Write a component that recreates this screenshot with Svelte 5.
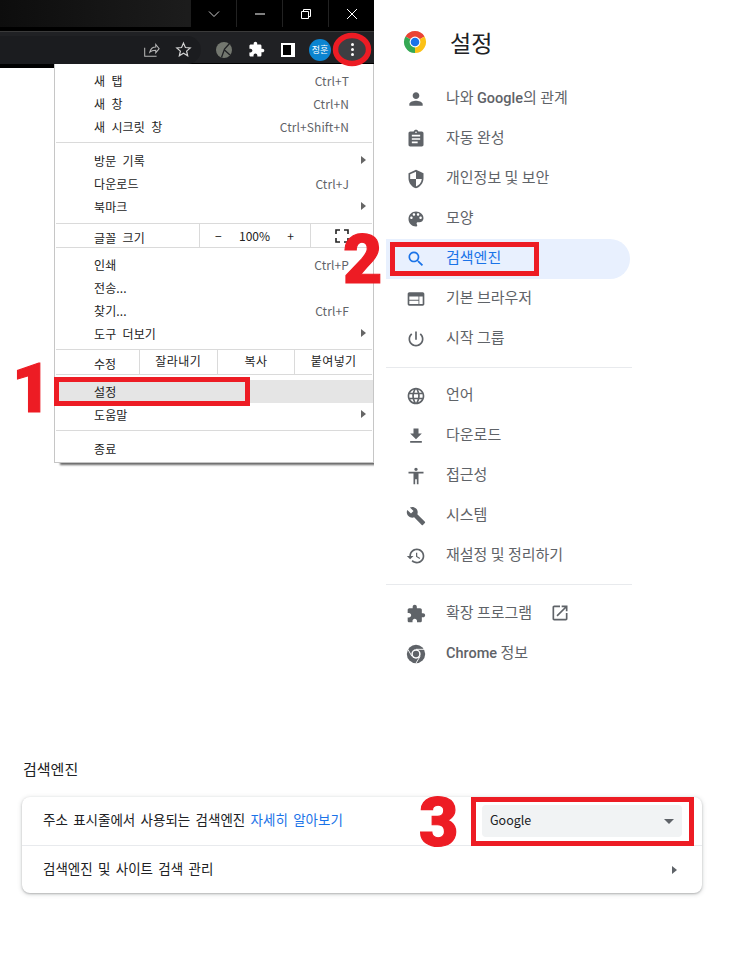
<script>
  const P = {
    person: 'M12 12c2.21 0 4-1.79 4-4s-1.79-4-4-4-4 1.79-4 4 1.79 4 4 4zm0 2c-2.67 0-8 1.34-8 4v2h16v-2c0-2.66-5.33-4-8-4z',
    clip: 'M19 3h-4.18C14.4 1.84 13.3 1 12 1c-1.3 0-2.4.84-2.82 2H5c-1.1 0-2 .9-2 2v14c0 1.1.9 2 2 2h14c1.1 0 2-.9 2-2V5c0-1.1-.9-2-2-2zm-7 0c.55 0 1 .45 1 1s-.45 1-1 1-1-.45-1-1 .45-1 1-1zm2 14H7v-2h7v2zm3-4H7v-2h10v2zm0-4H7V7h10v2z',
    shield: 'M12 1L3 5v6c0 5.55 3.84 10.74 9 12 5.16-1.26 9-6.45 9-12V5l-9-4zm0 10.99h7c-.53 4.12-3.28 7.79-7 8.94V12H5V6.3l7-3.11v8.8z',
    palette: 'M12 3c-4.97 0-9 4.03-9 9s4.03 9 9 9c.83 0 1.5-.67 1.5-1.5 0-.39-.15-.74-.39-1.01-.23-.26-.38-.61-.38-.99 0-.83.67-1.5 1.5-1.5H16c2.76 0 5-2.24 5-5 0-4.42-4.03-8-9-8zm-5.5 9c-.83 0-1.5-.67-1.5-1.5S5.67 9 6.5 9 8 9.67 8 10.5 7.33 12 6.5 12zm3-4C8.67 8 8 7.33 8 6.5S8.67 5 9.5 5s1.5.67 1.5 1.5S10.33 8 9.5 8zm5 0c-.83 0-1.5-.67-1.5-1.5S13.67 5 14.5 5s1.5.67 1.5 1.5S15.33 8 14.5 8zm3 4c-.83 0-1.5-.67-1.5-1.5S16.67 9 17.5 9s1.5.67 1.5 1.5-.67 1.5-1.5 1.5z',
    search: 'M15.5 14h-.79l-.28-.27C15.41 12.59 16 11.11 16 9.5 16 5.91 13.09 3 9.5 3S3 5.91 3 9.5 5.91 16 9.5 16c1.61 0 3.09-.59 4.23-1.57l.27.28v.79l5 4.99L20.49 19l-4.99-5zm-6 0C7.01 14 5 11.99 5 9.5S7.01 5 9.5 5 14 7.01 14 9.5 11.99 14 9.5 14z',
    web: 'M20 4H4c-1.1 0-1.99.9-1.99 2L2 18c0 1.1.9 2 2 2h16c1.1 0 2-.9 2-2V6c0-1.1-.9-2-2-2zm-5 14H4v-4h11v4zm0-5H4V9h11v4zm5 5h-4V9h4v9z',
    power: 'M13 3h-2v10h2V3zm4.83 2.17l-1.42 1.42C17.99 7.86 19 9.81 19 12c0 3.87-3.13 7-7 7s-7-3.13-7-7c0-2.19 1.01-4.14 2.58-5.42L6.17 5.17C4.23 6.82 3 9.26 3 12c0 4.97 4.03 9 9 9s9-4.03 9-9c0-2.74-1.23-5.18-3.17-6.83z',
    globe: 'M11.99 2C6.47 2 2 6.48 2 12s4.47 10 9.99 10C17.52 22 22 17.52 22 12S17.52 2 11.99 2zm6.93 6h-2.95c-.32-1.25-.78-2.45-1.38-3.56 1.84.63 3.37 1.91 4.33 3.56zM12 4.04c.83 1.2 1.48 2.53 1.91 3.96h-3.82c.43-1.43 1.08-2.76 1.91-3.96zM4.26 14C4.1 13.36 4 12.69 4 12s.1-1.36.26-2h3.38c-.08.66-.14 1.32-.14 2 0 .68.06 1.34.14 2H4.26zm.82 2h2.95c.32 1.25.78 2.45 1.38 3.56-1.84-.63-3.37-1.9-4.33-3.56zm2.95-8H5.08c.96-1.66 2.49-2.93 4.33-3.56C8.81 5.55 8.35 6.75 8.03 8zM12 19.96c-.83-1.2-1.48-2.53-1.91-3.96h3.82c-.43 1.43-1.08 2.76-1.91 3.96zM14.34 14H9.66c-.09-.66-.16-1.32-.16-2 0-.68.07-1.35.16-2h4.68c.09.65.16 1.32.16 2 0 .68-.07 1.34-.16 2zm.25 5.56c.6-1.11 1.06-2.31 1.38-3.56h2.95c-.96 1.65-2.49 2.93-4.33 3.56zM16.36 14c.08-.66.14-1.32.14-2 0-.68-.06-1.34-.14-2h3.38c.16.64.26 1.31.26 2s-.1 1.36-.26 2h-3.38z',
    download: 'M19 9h-4V3H9v6H5l7 7 7-7zM5 18v2h14v-2H5z',
    access: 'M12 2c1.1 0 2 .9 2 2s-.9 2-2 2-2-.9-2-2 .9-2 2-2zm9 7h-6v13h-2v-6h-2v6H9V9H3V7h18v2z',
    wrench: 'M22.7 19l-9.1-9.1c.9-2.3.4-5-1.5-6.9-2-2-5-2.4-7.4-1.3L9 6 6 9 1.6 4.7C.4 7.1.9 10.1 2.9 12.1c1.9 1.9 4.6 2.4 6.9 1.5l9.1 9.1c.4.4 1 .4 1.4 0l2.3-2.3c.5-.4.5-1.1.1-1.4z',
    restore: 'M13 3c-4.97 0-9 4.03-9 9H1l3.89 3.89.07.14L9 12H6c0-3.87 3.13-7 7-7s7 3.13 7 7-3.13 7-7 7c-1.93 0-3.68-.79-4.94-2.06l-1.42 1.42C8.27 19.99 10.51 21 13 21c4.97 0 9-4.03 9-9s-4.03-9-9-9zm-1 5v5l4.28 2.54.72-1.21-3.5-2.08V8H12z',
    ext: 'M20.5 11H19V7c0-1.1-.9-2-2-2h-4V3.5C13 2.12 11.88 1 10.5 1S8 2.12 8 3.5V5H4c-1.1 0-1.99.9-1.99 2v3.8H3.5c1.49 0 2.7 1.21 2.7 2.7s-1.21 2.7-2.7 2.7H2V20c0 1.1.9 2 2 2h3.8v-1.5c0-1.49 1.21-2.7 2.7-2.7 1.49 0 2.7 1.21 2.7 2.7V22H17c1.1 0 2-.9 2-2v-4h1.5c1.38 0 2.5-1.12 2.5-2.5S21.88 11 20.5 11z',
    open: 'M19 19H5V5h7V3H5c-1.11 0-2 .9-2 2v14c0 1.1.89 2 2 2h14c1.1 0 2-.9 2-2v-7h-2v7zM14 3v2h3.59l-9.83 9.83 1.41 1.41L19 6.41V10h2V3h-7z'
  };
  const groupA = [
    { i: 'person', pre: '나와 ', b: 'Google', t: '의 관계' }, { i: 'clip', t: '자동 완성' }, { i: 'shield', t: '개인정보 및 보안' },
    { i: 'palette', t: '모양' }, { i: 'search', t: '검색엔진', active: true }, { i: 'web', t: '기본 브라우저' }, { i: 'power', t: '시작 그룹' }
  ];
  const groupB = [
    { i: 'globe', t: '언어' }, { i: 'download', t: '다운로드' }, { i: 'access', t: '접근성' },
    { i: 'wrench', t: '시스템' }, { i: 'restore', t: '재설정 및 정리하기' }
  ];
  const m1 = [['새 탭', 'Ctrl+T'], ['새 창', 'Ctrl+N'], ['새 시크릿 창', 'Ctrl+Shift+N']];
  const m2 = [['방문 기록', '', 1], ['다운로드', 'Ctrl+J'], ['북마크', '', 1]];
  const m3 = [['인쇄', 'Ctrl+P'], ['전송...', ''], ['찾기...', 'Ctrl+F'], ['도구 더보기', '', 1]];
</script>

{#snippet row(item)}
  <div class="mrow">
    <span class="ko">{item[0]}</span>
    {#if item[1]}<span class="sc">{item[1]}</span>{/if}
    {#if item[2]}<i class="sub"></i>{/if}
  </div>
{/snippet}

{#snippet navrow(n)}
  <div class="nrow" class:active={n.active}>
    <svg class="nico" viewBox="0 0 24 24"><path d={P[n.i]} /></svg>
    <span class="ntext">{n.pre ?? ''}{#if n.b}<b>{n.b}</b>{/if}{n.t}</span>
  </div>
{/snippet}

<div class="page">
  <div class="top">
    <div class="left">
      <div class="browser">
        <div class="titlebar">
          <div class="winctl">
            <div class="wc"><svg viewBox="0 0 12 12"><path d="M1 3.5l5 5 5-5" fill="none" stroke="#ccc" stroke-width="1" /></svg></div>
            <div class="wc"><svg viewBox="0 0 12 12"><path d="M1 6h10" stroke="#fff" stroke-width="1" /></svg></div>
            <div class="wc"><svg viewBox="0 0 12 12"><path d="M1.5 3.5h7v7h-7zM3.5 3.5v-2h7v7h-2" fill="none" stroke="#fff" stroke-width="1" /></svg></div>
            <div class="wc"><svg viewBox="0 0 12 12"><path d="M1 1l10 10M11 1L1 11" stroke="#fff" stroke-width="1" /></svg></div>
          </div>
        </div>
        <div class="toolbar">
          <div class="omni">
            <svg class="tb share" viewBox="0 0 20 20"><path d="M2 8v10h14M8 13c1-4 4-6 7-6V4l4 5-4 5v-3c-3 0-5 0-7 2z" fill="none" stroke="#b8b8b8" stroke-width="1.2" /></svg>
            <svg class="tb star" viewBox="0 0 24 24"><path d="M12 3l2.7 6.2 6.8.6-5.1 4.5 1.5 6.6L12 17.4l-5.9 3.5 1.5-6.6-5.1-4.5 6.8-.6z" fill="none" stroke="#d4d4d4" stroke-width="1.7" /></svg>
          </div>
          <div class="tools">
            <svg class="kav" viewBox="0 0 16 16"><circle cx="8" cy="8" r="8" fill="#73776f" /><path d="M5.5 15.5L8.5 7l5-5.5M8.5 8l5.5 5" fill="none" stroke="#202124" stroke-width="1.3" /></svg>
            <svg class="puz" viewBox="0 0 24 24"><path d={P.ext} fill="#fff" /></svg>
            <div class="panel"></div>
            <div class="avatar">정훈</div>
            <div class="kebab"><b></b><b></b><b></b></div>
          </div>
        </div>
      </div>

      <div class="menu">
        <div class="group">{#each m1 as it}{@render row(it)}{/each}</div>
        <div class="group g2">{#each m2 as it}{@render row(it)}{/each}</div>
        <div class="split zoom">
          <span class="lbl ko">글꼴 크기</span>
          <div class="zoomctl"><span>−</span><span>100%</span><span>+</span></div>
          <div class="fs"><svg viewBox="0 0 14 14"><path d="M1 5V1h4M9 1h4v4M13 9v4H9M5 13H1V9" fill="none" stroke="#222" stroke-width="1.6" /></svg></div>
        </div>
        <div class="group g3">{#each m3 as it}{@render row(it)}{/each}</div>
        <div class="split edit">
          <span class="lbl">수정</span>
          <span class="cell">잘라내기</span><span class="cell">복사</span><span class="cell">붙여넣기</span>
        </div>
        <div class="group g4">
          <div class="mrow hover"><span class="ko">설정</span></div>
          <div class="mrow"><span class="ko">도움말</span><i class="sub"></i></div>
        </div>
        <div class="group g5"><div class="mrow"><span class="ko">종료</span></div></div>
      </div>
    </div>

    <nav class="nav">
      <header class="nhead">
        <svg class="logo" viewBox="0 0 24 24">
          <path d="M12 12L2.47 6.5A11 11 0 0 1 21.53 6.5z" fill="#ea4335" />
          <path d="M12 12L21.53 6.5A11 11 0 0 1 12 23z" fill="#fbc116" />
          <path d="M12 12L12 23A11 11 0 0 1 2.47 6.5z" fill="#34a853" />
          <circle cx="12" cy="12" r="5.4" fill="#fff" /><circle cx="12" cy="12" r="4.3" fill="#1a73e8" />
        </svg>
        <h1>설정</h1>
      </header>
      {#each groupA as n}{@render navrow(n)}{/each}
      <hr class="h1" />
      {#each groupB as n}{@render navrow(n)}{/each}
      <hr class="h2" />
      <div class="nrow">
        <svg class="nico" viewBox="0 0 24 24"><path d={P.ext} /></svg>
        <span class="ntext">확장 프로그램</span>
        <svg class="openi" viewBox="0 0 24 24"><path d={P.open} /></svg>
      </div>
      <div class="nrow">
        <svg class="nico" viewBox="0 0 24 24">
          <circle cx="12" cy="12" r="11" fill="#5f6368" /><circle cx="12" cy="12" r="5.6" fill="#fff" /><circle cx="12" cy="12" r="3.8" fill="#5f6368" />
          <path d="M12 6.4h10M7.1 14.8L2.3 6.5M16.9 14.8L12 23" stroke="#fff" stroke-width="1.1" />
        </svg>
        <span class="ntext"><b>Chrome</b> 정보</span>
      </div>
    </nav>
  </div>

  <section class="engine">
    <h2>검색엔진</h2>
    <div class="card">
      <div class="crow first">
        <span class="ctext">주소 표시줄에서 사용되는 검색엔진 <a href="#top">자세히 알아보기</a></span>
        <div class="select"><span>Google</span><i class="caret"></i></div>
      </div>
      <div class="crow second">
        <span class="ctext">검색엔진 및 사이트 검색 관리</span>
        <i class="arrow"></i>
      </div>
    </div>
  </section>

  <svg class="ring" viewBox="0 0 44 44"><ellipse cx="23" cy="21.5" rx="16.5" ry="14" fill="none" stroke="#ed1c24" stroke-width="5.5" /></svg>
  <div class="mark m-a"></div>
  <div class="mark m-b"></div>
  <div class="mark m-c"></div>
  <div class="num n1">1</div>
  <div class="num n2">2</div>
  <div class="num n3">3</div>
</div>

<style>
  :global(body) { margin: 0; background: #fff; }
  .page {
    position: relative; width: 730px; height: 955px; overflow: hidden; background: #fff;
    font-family: "Noto Sans CJK KR", "Noto Sans", sans-serif;
  }
  .top { display: flex; }
  .left { width: 374px; flex: none; }
  .browser { height: 68px; background: #000; display: flex; flex-direction: column; }
  .titlebar { height: 27px; background: linear-gradient(90deg, #0d0d0d, #1c1c1c 50%, #161616); display: flex; justify-content: flex-end; }
  .winctl { display: flex; background: #000; width: 183px; }
  .wc { width: 46px; height: 27px; display: flex; align-items: center; justify-content: center; border-left: 1px solid #222; box-sizing: border-box; }
  .wc:first-child { border: 0; width: 45px; }
  .wc svg { width: 12px; height: 12px; }
  .toolbar { margin-top: 4px; height: 32px; background: #202124; border-top: 1px solid #3a3a3a; box-sizing: border-box; display: flex; align-items: center; }
  .omni { width: 201px; height: 28px; background: #1b1c1f; border-radius: 0 14px 14px 0; display: flex; align-items: center; justify-content: flex-end; gap: 15px; padding-right: 9px; box-sizing: border-box; margin-top: 4px; }
  .tb.share { width: 17px; height: 17px; }
  .tb.star { width: 17px; height: 17px; }
  .tools { flex: 1; display: flex; align-items: center; margin-top: 4px; position: relative; }
  .kav { width: 16px; height: 16px; margin-left: 15px; }
  .puz { width: 17px; height: 17px; margin-left: 16px; }
  .panel { width: 14px; height: 14px; margin-left: 16px; background: #000; border: 2px solid #fff; border-right-width: 4px; box-sizing: border-box; }
  .avatar { width: 22px; height: 22px; border-radius: 50%; background: #0b84d0; color: #fff; font-size: 9px; line-height: 22px; text-align: center; margin-left: 14px; }
  .kebab { width: 28px; height: 28px; border-radius: 50%; background: #3d3e42; margin-left: 7px; display: flex; flex-direction: column; align-items: center; justify-content: center; gap: 2px; }
  .kebab b { width: 3px; height: 3px; background: #fff; border-radius: 50%; }

  .menu { margin: -4px 0 0 54px; width: 320px; height: 399px; box-sizing: border-box; position: relative; background: #fff; border: 1px solid #c6c6c6; border-top: 0; box-shadow: 4px 4px 2px -2px rgba(0, 0, 0, .6); clip-path: inset(0 0 -8px 0); font-size: 12px; color: #222; }
  .ko { word-spacing: 3.5px; letter-spacing: .1px; }
  .group { border-top: 1px solid #dadada; margin: 0 1px; padding: 6px 0 3px; }
  .group:first-child { border-top: 0; padding: 5px 0 4px; }
  .mrow { height: 23px; display: flex; align-items: center; justify-content: space-between; padding: 0 24px 0 39px; position: relative; margin: 0 -1px; line-height: 1; }
  .sc { color: #5f6368; letter-spacing: .1px; }
  .sub { position: absolute; right: 7px; top: 7px; border-left: 5px solid #666; border-top: 4px solid transparent; border-bottom: 4px solid transparent; }
  .mrow.hover { background: #e5e5e5; }
  .group.g2 { padding: 6px 0 5px; height: 81px; box-sizing: border-box; }
  .group.g3 { padding: 5px 0 4px; }
  .group.g4 { padding: 5px 0 4px; }
  .group.g5 { padding: 6px 0 3px; }
  .split { display: flex; height: 23px; border-top: 1px solid #dadada; margin: 0 1px; align-items: center; }
  .split.edit { height: 24px; }
  .lbl { padding-left: 38px; padding-top: 3px; }
  .zoom .lbl { width: 143px; box-sizing: border-box; }
  .zoomctl { width: 112px; height: 100%; display: flex; align-items: center; justify-content: space-between; padding: 0 16px 0 15px; border-left: 1px solid #dadada; border-right: 1px solid #dadada; box-sizing: border-box; }
  .fs { flex: 1; display: flex; justify-content: center; }
  .fs svg { width: 14px; height: 14px; }
  .edit .lbl { width: 83px; box-sizing: border-box; }
  .cell { width: 78px; height: 100%; line-height: 22px; text-align: center; border-left: 1px solid #dadada; box-sizing: border-box; letter-spacing: .4px; }

  .nav { margin-left: 12px; width: 246px; flex: none; font-size: 15px; color: #5f6368; }
  .nhead { height: 79px; display: flex; align-items: flex-start; box-sizing: border-box; padding-left: 17px; padding-top: 30px; }
  .logo { width: 24px; height: 24px; }
  h1 { margin: -6px 0 0 23px; font-size: 23px; font-weight: 400; color: #202124; line-height: 36px; }
  .nrow { height: 40px; display: flex; align-items: center; padding-left: 20px; width: 244px; box-sizing: border-box; border-radius: 0 20px 20px 0; }
  .ntext { margin-bottom: 6px; white-space: nowrap; }
  .ntext b { font-family: Roboto, sans-serif; font-weight: 500; font-size: 14.5px; }
  .nrow.active { background: #e8f0fe; color: #1a73e8; }
  .nico { width: 20px; height: 20px; margin-right: 20px; fill: #5f6368; flex: none; }
  .active .nico { fill: #1a73e8; }
  .openi { width: 20px; height: 20px; margin: 0 0 2px 18px; fill: #5f6368; }
  hr { height: 1px; border: 0; background: #e8eaed; width: 246px; }
  hr.h1 { margin: 8px 0 8px; }
  hr.h2 { margin: 8px 0 9px; }

  .engine { margin: 85px 0 0 22px; width: 680px; }
  h2 { margin: 0 0 19px 1px; font-size: 15px; font-weight: 400; color: #202124; line-height: 19px; }
  .card { height: 96px; background: #fff; border-radius: 8px; box-shadow: 0 1px 2px rgba(60, 64, 67, .3), 0 1px 4px 1px rgba(60, 64, 67, .15); font-size: 13.5px; color: #202124; }
  .crow { height: 48px; display: flex; align-items: center; justify-content: space-between; box-sizing: border-box; padding: 0 20px 0 21px; }
  .ctext { word-spacing: 2.3px; }
  .first .ctext { margin-bottom: 4px; }
  .second .ctext { margin-bottom: 4px; }
  .crow.second { border-top: 1px solid #e8eaed; }
  a { color: #1a73e8; text-decoration: none; }
  .select { width: 200px; height: 32px; background: #f1f3f4; border-radius: 4px; display: flex; align-items: center; justify-content: space-between; padding: 0 8px; box-sizing: border-box; font-size: 12.5px; }
  .select span { margin-bottom: 3px; }
  .caret { border-top: 5px solid #5f6368; border-left: 5px solid transparent; border-right: 5px solid transparent; }
  .arrow { border-left: 5px solid #5f6368; border-top: 4px solid transparent; border-bottom: 4px solid transparent; margin-right: 5px; }

  .ring { position: absolute; left: 329px; top: 28px; width: 44px; height: 44px; }
  .mark { position: absolute; border: 5px solid #ed1c24; box-sizing: border-box; }
  .m-a { left: 54px; top: 377px; width: 196px; height: 29px; }
  .m-b { left: 390px; top: 242px; width: 149px; height: 34px; }
  .m-c { left: 471px; top: 797px; width: 223px; height: 49px; }
  .num { position: absolute; color: #ed1c24; font-family: Roboto, sans-serif; font-weight: 900; font-size: 68px; line-height: 68px; -webkit-text-stroke: 1.2px #ed1c24; }
  .n1 { left: 12px; top: 355px; }
  .n2 { left: 343px; top: 226px; }
  .n3 { left: 419px; top: 789px; }
</style>
